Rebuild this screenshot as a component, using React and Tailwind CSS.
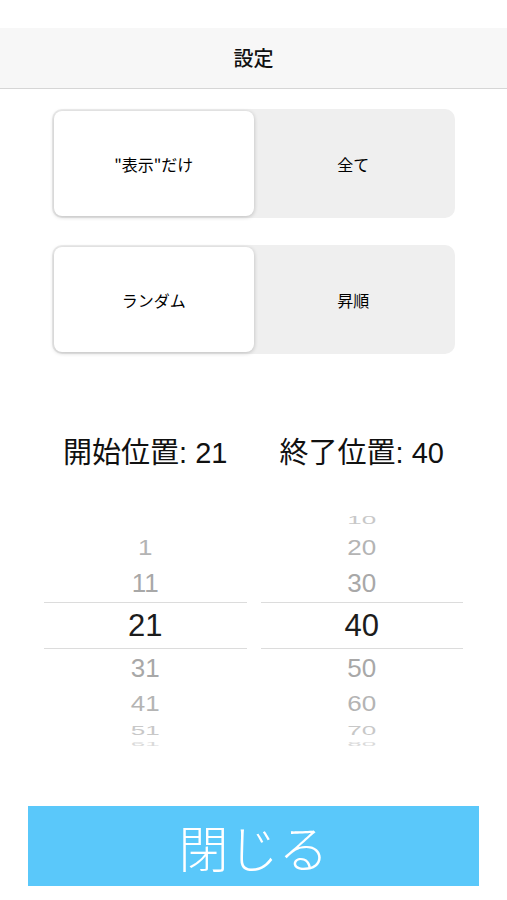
import React, { useState } from 'react';

const FONT = { fontFamily: '"Liberation Sans", "Noto Sans CJK JP", sans-serif' };
const CJK = { fontFamily: '"Noto Sans CJK JP", sans-serif' };

// row offset from the selection -> height, vertical squash, colour
const ROWS = [
  { off: -3, h: 'h-[21px]', scale: 0.45, color: 'text-[#c8c8c8]' },
  { off: -2, h: 'h-[33px]', scale: 0.85, color: 'text-[#b4b4b4]' },
  { off: -1, h: 'h-[38px]', scale: 1, color: 'text-[#a8a8a8]' },
  { off: 0, h: 'h-[47px]', scale: 1, color: 'text-[#1c1c1c]' },
  { off: 1, h: 'h-[38px]', scale: 1, color: 'text-[#a8a8a8]' },
  { off: 2, h: 'h-[34px]', scale: 0.82, color: 'text-[#b4b4b4]' },
  { off: 3, h: 'h-[19px]', scale: 0.5, color: 'text-[#c8c8c8]' },
  { off: 4, h: 'h-[8px]', scale: 0.2, color: 'text-[#dadada]' },
];

function Segment({ options, value, onChange }) {
  return (
    <div className="flex h-[109px] rounded-[10px] bg-[#efefef] p-[2px]">
      {options.map((opt, i) => (
        <button
          key={opt}
          onClick={() => onChange(i)}
          className={
            'flex-1 flex items-center justify-center rounded-[8px] text-[16px] text-black ' +
            (value === i ? 'bg-white shadow-[0_1px_4px_rgba(0,0,0,0.22)]' : '')
          }
          style={CJK}
        >
          {opt}
        </button>
      ))}
    </div>
  );
}

function Wheel({ values, index }) {
  return (
    <div className="relative flex-1 flex flex-col">
      {ROWS.map((r) => {
        const v = values[index + r.off];
        const center = r.off === 0;
        return (
          <div
            key={r.off}
            className={
              r.h + ' flex items-center justify-center overflow-hidden ' +
              (center ? 'border-y border-[#dcdcdc] text-[31px] ' : 'text-[26px] ') + r.color
            }
            style={FONT}
          >
            <span className="leading-none" style={{ transform: `scaleY(${r.scale})` }}>
              {v !== undefined ? v : ''}
            </span>
          </div>
        );
      })}
    </div>
  );
}

export default function App() {
  const [filter, setFilter] = useState(0);
  const [order, setOrder] = useState(0);
  const starts = [1, 11, 21, 31, 41, 51, 61, 71];
  const ends = [10, 20, 30, 40, 50, 60, 70, 80, 90];
  const startIdx = 2;
  const endIdx = 3;

  return (
    <div className="w-[507px] h-[900px] bg-white flex flex-col">
      <div className="h-[28px]" />
      <div className="h-[61px] bg-[#f7f7f7] border-b border-[#d6d6d6] flex items-center justify-center">
        <span className="text-[20px] font-medium text-[#111]" style={CJK}>設定</span>
      </div>

      <div className="mx-[52px] mt-[20px] flex flex-col gap-[27px]">
        <Segment options={['"表示"だけ', '全て']} value={filter} onChange={setFilter} />
        <Segment options={['ランダム', '昇順']} value={order} onChange={setOrder} />
      </div>

      <div className="mx-[44px] mt-[75px] flex gap-[14px] text-[29px] text-[#111]" style={FONT}>
        <div className="flex-1 text-center">
          <span style={CJK}>開始位置</span>: {starts[startIdx]}
        </div>
        <div className="flex-1 text-center">
          <span style={CJK}>終了位置</span>: {ends[endIdx]}
        </div>
      </div>

      <div className="mx-[44px] mt-[34px] flex gap-[14px]">
        <Wheel values={[undefined, ...starts]} index={startIdx + 1} />
        <Wheel values={ends} index={endIdx} />
      </div>

      <div className="mx-[28px] mt-[58px] h-[80px] bg-[#5ac8fa] flex items-center justify-center">
        <span className="text-[50px] font-light text-white leading-none" style={CJK}>閉じる</span>
      </div>
    </div>
  );
}
